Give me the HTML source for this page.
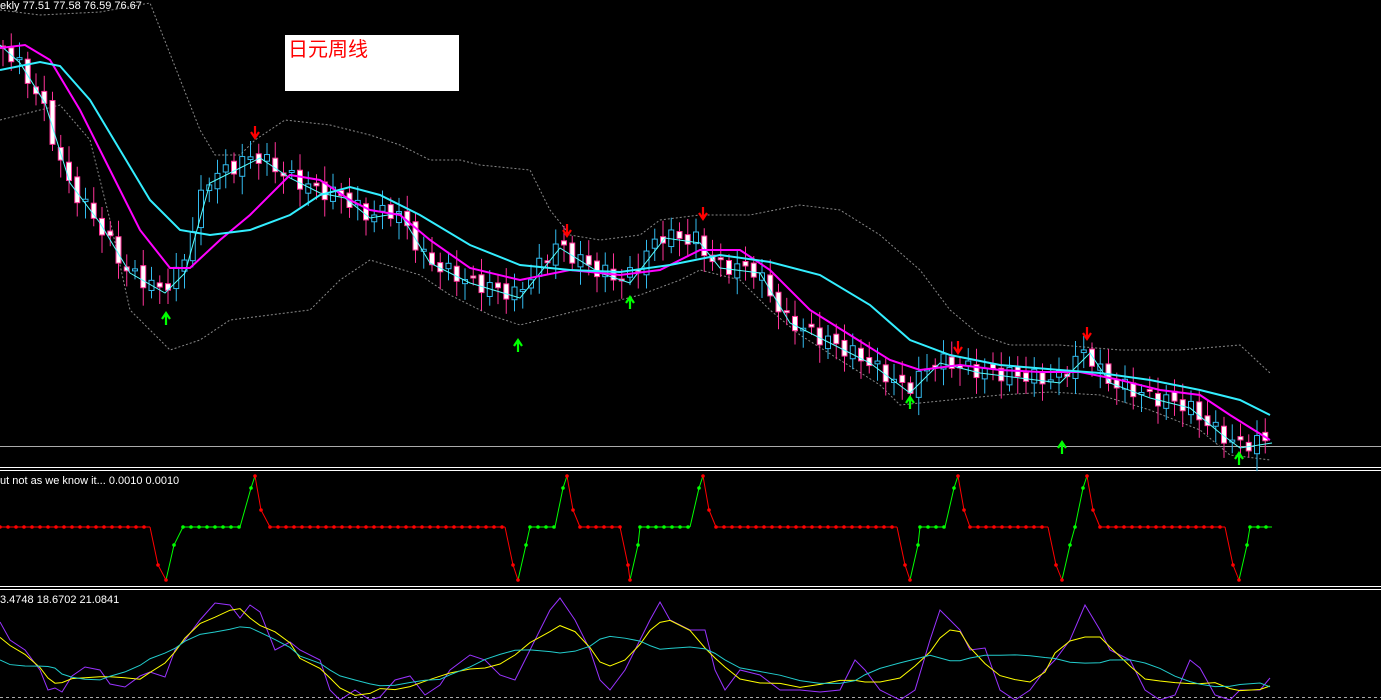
<!DOCTYPE html>
<html><head><meta charset="utf-8"><style>
html,body{margin:0;padding:0;background:#000;width:1381px;height:700px;overflow:hidden}
svg{display:block}
text{font-family:"Liberation Sans",sans-serif;font-size:11px;fill:#fff}
</style></head><body>
<svg id="s" width="1381" height="700" xmlns="http://www.w3.org/2000/svg">
<rect width="1381" height="700" fill="#000"/>
<text x="0" y="9">ekly  77.51 77.58 76.59 76.67</text>
<rect x="285" y="35" width="174" height="56" fill="#fff"/>
<text x="288" y="56" style="font-family:'Liberation Sans','Noto Sans CJK SC',sans-serif;font-size:20px;fill:#f00">日元周线</text>
<line x1="0" y1="446.5" x2="1381" y2="446.5" stroke="#aaa" stroke-width="1"/>
<line x1="0" y1="467.5" x2="1381" y2="467.5" stroke="#fff"/>
<line x1="0" y1="470.5" x2="1381" y2="470.5" stroke="#fff"/>
<line x1="0" y1="586.5" x2="1381" y2="586.5" stroke="#fff"/>
<line x1="0" y1="589.5" x2="1381" y2="589.5" stroke="#fff"/>
<line x1="0" y1="697.5" x2="1381" y2="697.5" stroke="#aaa" stroke-dasharray="3,3"/>
<text x="0" y="484">ut not as we know it...  0.0010 0.0010</text>
<text x="0" y="603">3.4748 18.6702 21.0841</text>
<g id="g"></g>
</svg>
<script>
const g=document.getElementById('g');const NS='http://www.w3.org/2000/svg';
function el(t,a){const e=document.createElementNS(NS,t);for(const k in a)e.setAttribute(k,a[k]);g.appendChild(e);return e}
function pl(p,a){a.points=p.map(q=>q.join(',')).join(' ');a.fill='none';return el('polyline',a)}
function interp(p,x){for(let i=0;i<p.length-1;i++){if(x>=p[i][0]&&x<=p[i+1][0]){const t=(x-p[i][0])/(p[i+1][0]-p[i][0]);return p[i][1]+t*(p[i+1][1]-p[i][1])}}return p[p.length-1][1]}
const up=[[0,10],[40,15],[100,12],[150,3],[200,130],[215,155],[240,155],[255,140],[285,120],[330,125],[370,135],[400,145],[430,160],[460,160],[480,165],[530,170],[550,210],[570,235],[600,240],[640,235],[660,220],[700,215],[750,215],[800,205],[840,210],[880,235],[920,270],[950,310],[980,335],[1010,345],[1060,345],[1120,350],[1180,350],[1240,345],[1270,373]];
const lo=[[0,120],[40,110],[60,105],[90,140],[110,220],[130,310],[170,350],[200,340],[230,320],[270,315],[310,310],[340,280],[370,260],[420,275],[450,295],[490,315],[520,325],[560,315],[600,305],[640,295],[680,280],[700,270],[740,280],[770,310],[800,335],[840,360],[880,385],[900,405],[950,400],[1000,395],[1050,392],[1100,395],[1150,410],[1200,430],[1230,455],[1270,460]];
pl(up,{stroke:'#888','stroke-dasharray':'2,2'});pl(lo,{stroke:'#888','stroke-dasharray':'2,2'});
const pr=[[0,42],[20,60],[45,100],[70,180],[100,220],[130,270],[165,290],[185,270],[210,180],[240,165],[260,155],[290,175],[320,190],[345,195],[370,215],[400,210],[430,260],[470,280],[520,295],[560,245],[600,270],[630,280],[665,235],[700,240],[720,265],[760,270],[790,320],[830,340],[870,360],[910,390],[940,360],[980,370],[1020,375],[1060,380],[1090,350],[1110,380],[1150,395],[1190,405],[1220,430],[1240,445],[1272,440]];
let prev=42;
for(let i=0;i<154;i++){const x=3+i*8.25;const c=interp(pr,x+4)+Math.sin(i*2.3)*8;const o=prev+Math.cos(i*1.7)*4;prev=c;
const top=Math.min(o,c),bot=Math.max(o,c),h=Math.max(2,bot-top);const bear=c>o;const col=bear?'#ff3399':'#33bbee';
el('line',{x1:x,y1:top-6-Math.abs(Math.sin(i))*10,x2:x,y2:bot+6+Math.abs(Math.cos(i*1.3))*12,stroke:col});
el('rect',{x:x-2.5,y:top,width:5,height:h,fill:bear?'#fff':'#000',stroke:col,'stroke-width':1});}
const fast=pr.map(p=>[p[0],p[1]+3]);pl(fast,{stroke:'#5ff',"stroke-width":1});
const mg=[[0,48],[25,45],[50,60],[80,110],[110,170],[140,230],[170,268],[190,268],[220,240],[250,215],[290,175],[320,180],[350,200],[370,210],[400,215],[430,240],[470,268],[520,280],[570,270],[620,275],[660,270],[700,250],[740,250],[770,270],[810,310],[850,335],[890,360],[920,370],[960,365],[1000,370],[1040,372],[1080,372],[1120,380],[1160,390],[1200,395],[1230,415],[1270,440]];
pl(mg,{stroke:'#f0f','stroke-width':2});
const cy=[[0,70],[40,62],[60,66],[90,100],[120,150],[150,200],[180,230],[210,235],[250,230],[290,215],[320,195],[350,187],[380,195],[420,215],[470,245],[520,265],[570,270],[620,272],[670,265],[720,255],[770,262],[820,275],[870,305],[910,340],[950,355],[1000,365],[1060,370],[1100,373],[1150,380],[1200,390],[1240,400],[1270,415]];
pl(cy,{stroke:'#3ef','stroke-width':2});
function arrow(x,y,d,c){const s=d;el('path',{d:`M${x} ${y-7*s}V${y+3*s}M${x-4} ${y-1*s}L${x} ${y+5*s}L${x+4} ${y-1*s}`,stroke:c,'stroke-width':2.2,fill:'none'})}
[[255,133],[567,231],[703,214],[958,348],[1087,334]].forEach(a=>arrow(a[0],a[1],1,'#f00'));
[[166,318],[518,345],[630,302],[910,402],[1062,447],[1239,458]].forEach(a=>arrow(a[0],a[1],-1,'#0f0'));
// middle
const B=527;const ev=[[150,166,183,240,255,270],[505,518,530,555,567,580],[620,630,640,690,703,716],[897,910,920,945,958,970],[1048,1062,1075,1075,1087,1100],[1225,1239,1250,1272,null,null]];
let red=[[0,B]];let x=0;
function dots(x1,x2,c){for(let xx=x1;xx<=x2;xx+=8)el('circle',{cx:xx,cy:B,r:1.8,fill:c})}
let start=0;
ev.forEach(e=>{const[a,l,r,gE,pk,en]=e;el('line',{x1:start,y1:B,x2:a,y2:B,stroke:'#f00'});dots(start,a,'#f00');
pl([[a,B],[a+8,565],[l,580]],{stroke:'#f00'});pl([[l,580],[l+8,545],[r,B],[gE,B]],{stroke:'#0f0'});dots(r,gE,'#0f0');
[[a+8,565],[l,580]].forEach(p=>el('circle',{cx:p[0],cy:p[1],r:1.8,fill:'#f00'}));el('circle',{cx:l+8,cy:545,r:1.8,fill:'#0f0'});
if(pk){pl([[gE,B],[pk-4,488],[pk,476]],{stroke:'#0f0'});el('circle',{cx:pk-4,cy:488,r:1.8,fill:'#0f0'});pl([[pk,476],[pk+6,510],[en,B]],{stroke:'#f00'});el('circle',{cx:pk,cy:476,r:1.8,fill:'#f00'});el('circle',{cx:pk+6,cy:510,r:1.8,fill:'#f00'});start=en;}});
// bottom
const pu=[[0,622],[10,640],[25,650],[40,670],[48,690],[55,688],[62,692],[72,676],[85,667],[100,670],[110,684],[125,687],[140,676],[150,672],[165,677],[175,650],[185,640],[200,620],[215,603],[230,605],[240,618],[250,605],[260,612],[275,650],[290,642],[300,650],[320,660],[330,690],[340,700],[355,690],[370,700],[380,697],[395,680],[410,676],[425,695],[440,685],[450,670],[470,655],[485,660],[500,675],[515,680],[530,650],[550,610],[560,598],[575,620],[590,650],[600,680],[610,690],[625,670],[640,640],[650,620],[660,602],[670,620],[690,630],[705,630],[715,670],[725,690],[740,670],[760,675],[780,690],[800,690],[820,692],[840,690],[855,660],[865,670],[880,690],[900,700],[915,690],[930,640],[940,610],[950,620],[960,630],[970,650],[985,648],[1000,690],[1015,700],[1030,690],[1045,670],[1055,660],[1070,640],[1085,605],[1100,630],[1110,650],[1130,660],[1145,690],[1160,700],[1175,695],[1190,660],[1200,668],[1215,695],[1230,700],[1240,690],[1260,690],[1270,678]];
pl(pu,{stroke:'#9933ff'});
function smooth(p,n){return p.map((q,i)=>{let s=0,c=0;for(let j=Math.max(0,i-n);j<=Math.min(p.length-1,i+n);j++){s+=p[j][1];c++}return[q[0],s/c]})}
pl(smooth(pu,2),{stroke:'#ff0'});pl(smooth(pu,5),{stroke:'#2cc'});
</script>
</body></html>
